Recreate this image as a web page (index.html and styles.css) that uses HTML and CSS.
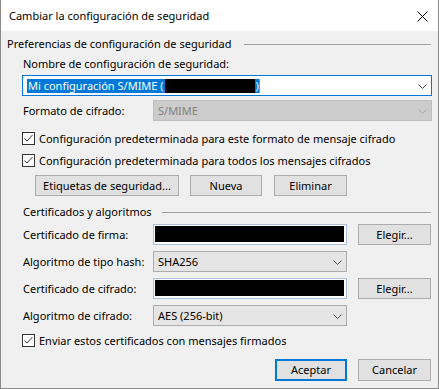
FILE: index.html
```html
<!DOCTYPE html>
<html lang="es">
  <head>
    <meta charset="utf-8" />
    <title>Cambiar la configuración de seguridad</title>
    <link rel="stylesheet" href="styles.css">
  </head>
  <body>
    <div class="dialog">
      <div class="titlebar">
        <span class="title">Cambiar la configuración de seguridad</span>
        <svg class="close" width="11" height="11" viewBox="0 0 11 11">
          <path d="M0.5 0.5 L10.5 10.5 M10.5 0.5 L0.5 10.5" stroke="#000" stroke-width="1" fill="none" />
        </svg>
      </div>

      <div class="content">
        <div class="group-head">
          <span>Preferencias de configuración de seguridad</span>
          <span class="rule"></span>
        </div>

        <div class="indent">
          <div class="label-line">Nombre de configuración de seguridad:</div>
          <div class="combo combo-edit">
            <span class="selected">Mi configuración S/MIME (<span class="redact"></span>)</span><span class="caret"></span>
            <svg class="chevron" width="9" height="5" viewBox="0 0 9 5">
              <path d="M0.5 0.5 L4.5 4.5 L8.5 0.5" stroke="#444" fill="none" />
            </svg>
          </div>

          <div class="field-row row-format">
            <span class="field-label">Formato de cifrado:</span>
            <div class="combo combo-disabled">
              <span class="value">S/MIME</span>
              <svg class="chevron" width="9" height="5" viewBox="0 0 9 5">
                <path d="M0.5 0.5 L4.5 4.5 L8.5 0.5" stroke="#a8a8a8" fill="none" />
              </svg>
            </div>
          </div>

          <div class="check-row row-check1">
            <span class="checkbox">
              <svg width="11" height="11" viewBox="0 0 11 11"><path d="M1.5 5.5 L4 8 L9.5 2" stroke="#333" fill="none" /></svg>
            </span>
            Configuración predeterminada para este formato de mensaje cifrado
          </div>
          <div class="check-row row-check2">
            <span class="checkbox">
              <svg width="11" height="11" viewBox="0 0 11 11"><path d="M1.5 5.5 L4 8 L9.5 2" stroke="#333" fill="none" /></svg>
            </span>
            Configuración predeterminada para todos los mensajes cifrados
          </div>

          <div class="button-row">
            <button class="btn btn-labels">Etiquetas de seguridad...</button>
            <button class="btn btn-new">Nueva</button>
            <button class="btn btn-delete">Eliminar</button>
          </div>

          <div class="group-head group-sub">
            <span>Certificados y algoritmos</span>
            <span class="rule"></span>
          </div>

          <div class="field-row row-sign">
            <span class="field-label">Certificado de firma:</span>
            <div class="textbox"><span class="redact-fill"></span></div>
            <button class="btn btn-choose">Elegir...</button>
          </div>
          <div class="field-row row-next">
            <span class="field-label">Algoritmo de tipo hash:</span>
            <div class="combo combo-short">
              <span class="value">SHA256</span>
              <svg class="chevron" width="9" height="5" viewBox="0 0 9 5">
                <path d="M0.5 0.5 L4.5 4.5 L8.5 0.5" stroke="#555" fill="none" />
              </svg>
            </div>
          </div>
          <div class="field-row row-next">
            <span class="field-label">Certificado de cifrado:</span>
            <div class="textbox"><span class="redact-fill"></span></div>
            <button class="btn btn-choose">Elegir...</button>
          </div>
          <div class="field-row row-next">
            <span class="field-label">Algoritmo de cifrado:</span>
            <div class="combo combo-short">
              <span class="value">AES (256-bit)</span>
              <svg class="chevron" width="9" height="5" viewBox="0 0 9 5">
                <path d="M0.5 0.5 L4.5 4.5 L8.5 0.5" stroke="#555" fill="none" />
              </svg>
            </div>
          </div>

          <div class="check-row row-check3">
            <span class="checkbox">
              <svg width="11" height="11" viewBox="0 0 11 11"><path d="M1.5 5.5 L4 8 L9.5 2" stroke="#333" fill="none" /></svg>
            </span>
            Enviar estos certificados con mensajes firmados
          </div>

          <div class="actions">
            <button class="btn btn-ok">Aceptar</button>
            <button class="btn btn-cancel">Cancelar</button>
          </div>
        </div>
      </div>
    </div>
  </body>
</html>
```
FILE: styles.css
```css
body {
  margin: 0;
  font-family: "Noto Sans", "Liberation Sans", sans-serif;
  font-size: 11px;
  color: #000;
  background: #fff;
}

.dialog {
  width: 439px;
  height: 389px;
  box-sizing: border-box;
  border: 1px solid #8a8a8a;
  border-top: none;
  display: flex;
  flex-direction: column;
  overflow: hidden;
}

.titlebar {
  height: 31px;
  flex-shrink: 0;
  background: #fff;
  display: flex;
  align-items: center;
  padding: 0 10px 0 8px;
}
.title {
  flex-grow: 1;
  line-height: 14px;
  margin-top: 1px;
}
.close {
  display: block;
  margin-top: 1px;
}

.content {
  flex-grow: 1;
  background: #f0f0f0;
  padding: 0 6px 0 6px;
}

.group-head {
  display: flex;
  align-items: center;
  height: 14px;
  line-height: 14px;
  margin-top: 6px;
  white-space: nowrap;
}
.group-head .rule {
  flex-grow: 1;
  height: 1px;
  background: #a0a0a0;
  margin-left: 12px;
  margin-right: 1px;
}
.group-sub {
  margin-top: 9px;
  padding-left: 1px;
}
.group-sub .rule {
  margin-left: 10px;
}

.indent {
  padding-left: 15px;
}

.label-line {
  height: 14px;
  line-height: 14px;
  margin-top: 6px;
  padding-left: 1px;
}

.combo {
  position: relative;
  box-sizing: border-box;
  height: 21px;
  display: flex;
  align-items: center;
  white-space: nowrap;
}
.combo .chevron {
  position: absolute;
  right: 4px;
  top: 8px;
}
.combo .value {
  padding-left: 4px;
}

.combo-edit {
  margin-top: 4px;
  background: #fff;
  border: 1px solid #0078d7;
  padding-left: 4px;
}
.combo-edit .chevron {
  top: 8px;
}
.selected {
  background: #0078d7;
  color: #fff;
  height: 14px;
  line-height: 14px;
  display: flex;
  align-items: center;
  padding-left: 1px;
}
.redact {
  display: inline-block;
  width: 90px;
  height: 14px;
  background: #000;
  margin: 0 1px 0 1px;
}
.caret {
  display: inline-block;
  width: 1px;
  height: 14px;
  background: #f47920;
}

.combo-disabled {
  flex-grow: 1;
  background: #cccccc;
  border: 1px solid #bfbfbf;
  color: #838383;
}

.combo-short {
  width: 194px;
  background: #e5e5e5;
  border: 1px solid #adadad;
}

.field-row {
  display: flex;
  align-items: center;
  height: 21px;
}
.row-format {
  margin-top: 4px;
}
.row-sign {
  margin-top: 5px;
}
.row-next {
  margin-top: 6px;
}
.field-label {
  width: 131px;
  flex-shrink: 0;
  padding-left: 1px;
  box-sizing: border-box;
  line-height: 14px;
}

.textbox {
  width: 194px;
  height: 21px;
  box-sizing: border-box;
  border: 1px solid #abc0da;
  background: #fff;
  padding: 1px 2px 2px 1px;
  display: flex;
}
.redact-fill {
  flex-grow: 1;
  background: #000;
}

.check-row {
  display: flex;
  align-items: center;
  height: 13px;
  line-height: 14px;
  white-space: nowrap;
}
.row-check1 {
  margin-top: 11px;
}
.row-check2 {
  margin-top: 9px;
}
.row-check3 {
  margin-top: 8px;
}
.checkbox {
  width: 13px;
  height: 13px;
  box-sizing: border-box;
  border: 1px solid #333;
  background: #fff;
  margin-right: 4px;
  flex-shrink: 0;
}
.checkbox svg {
  display: block;
}

.btn {
  font-family: inherit;
  font-size: 11px;
  color: #000;
  background: #e1e1e1;
  border: 1px solid #adadad;
  height: 21px;
  padding: 0;
  margin: 0;
  line-height: 14px;
  box-sizing: border-box;
}

.button-row {
  display: flex;
  margin-top: 8px;
  padding-left: 13px;
}
.btn-labels {
  width: 144px;
}
.btn-new {
  width: 72px;
  margin-left: 11px;
}
.btn-delete {
  width: 73px;
  margin-left: 12px;
}

.btn-choose {
  width: 73px;
  margin-left: 11px;
}

.actions {
  display: flex;
  justify-content: flex-end;
  margin-top: 12px;
  padding-right: 1px;
}
.btn-ok {
  width: 72px;
  height: 22px;
  border: 2px solid #0078d7;
}
.btn-cancel {
  width: 73px;
  height: 22px;
  margin-left: 11px;
}
```
